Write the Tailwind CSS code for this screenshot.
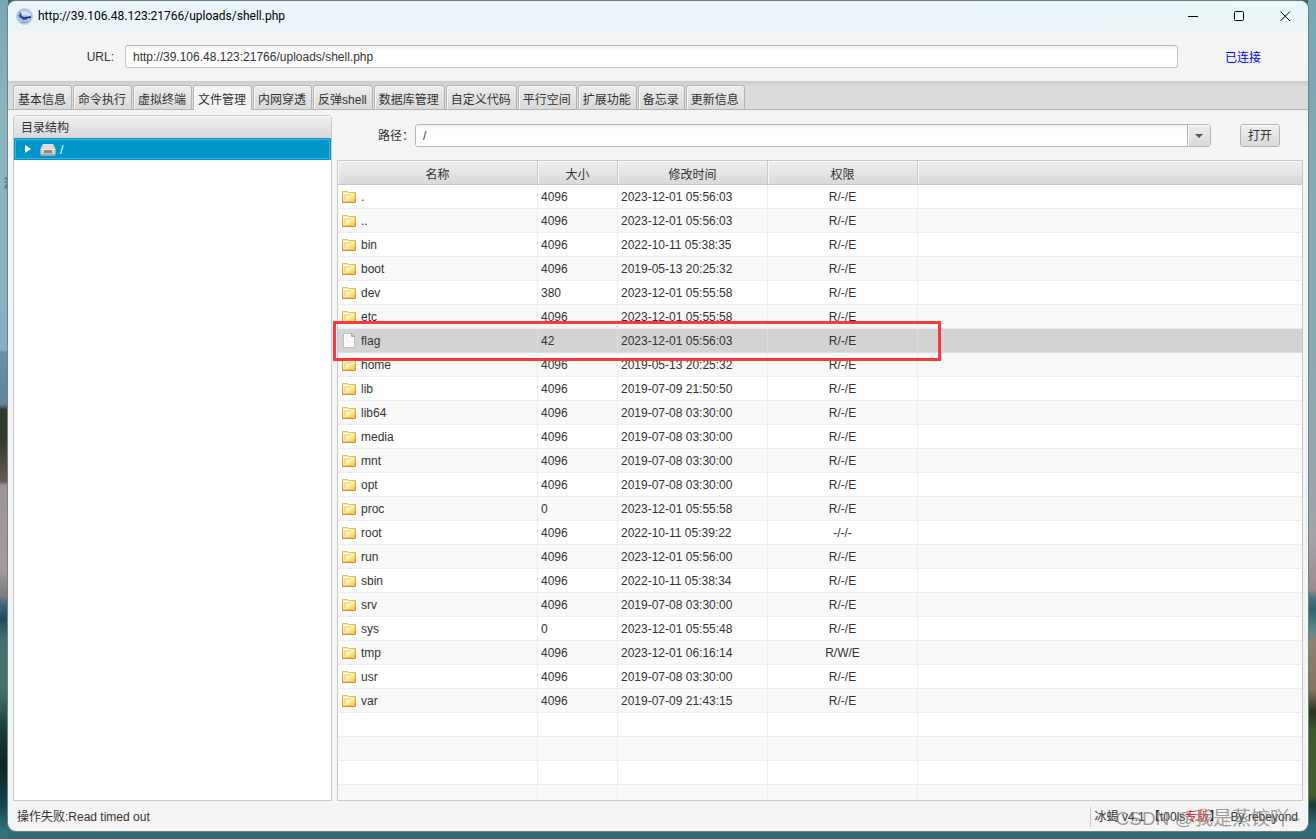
<!DOCTYPE html>
<html lang="zh-CN">
<head>
<meta charset="utf-8">
<title>http://39.106.48.123:21766/uploads/shell.php</title>
<script src="https://cdn.jsdelivr.net/npm/@tailwindcss/browser@4"></script>
</head>
<body class="relative h-screen overflow-hidden bg-[#316a75] font-['Liberation_Sans','Noto_Sans_CJK_SC',sans-serif] text-xs text-[#323232]">
<svg width="0" height="0" class="absolute" aria-hidden="true">
  <defs>
    <linearGradient id="gold" x1="0" y1="0" x2="1" y2="1"><stop offset="0" stop-color="#fff6c4"/><stop offset=".5" stop-color="#fdeb9c"/><stop offset="1" stop-color="#f0c22e"/></linearGradient>
    <linearGradient id="edge" x1="0" y1="0" x2="0" y2="1"><stop offset="0" stop-color="#e2bb48"/><stop offset="1" stop-color="#d58a3a"/></linearGradient>
    <linearGradient id="paper" x1="0" y1="0" x2="1" y2="1"><stop offset="0" stop-color="#f0f0f0"/><stop offset="1" stop-color="#fff"/></linearGradient>
    <symbol id="folder" viewBox="0 0 14 12">
      <path d="M.5 11.500V.5h5l1 1h7v10z" fill="url(#gold)" stroke="url(#edge)"/>
      <path d="M2 2.500h3M8 2.500h4" stroke="#fffbe2" fill="none"/>
      <path d="M2.500 9V4.500h4l1-1h4" stroke="#f0d27a" fill="none"/>
      <path d="M3 5.500h5l1-1h3M4 7.500h3" stroke="#fffbe2" fill="none"/>
      <path d="M1 10.500h12" stroke="#f2c94a" fill="none"/>
    </symbol>
    <symbol id="file" viewBox="0 0 12 15">
      <path d="M.5.5h8l3 3v11H.5z" fill="url(#paper)" stroke="#c2c2c2"/>
      <path d="M1.500 13.500v-12h6" stroke="#fff" fill="none"/>
      <path d="M8.500.5v3h3z" fill="#c5c5c5" stroke="#ababab"/>
    </symbol>
  </defs>
</svg>
<div class="absolute inset-y-0 left-0 w-2 bg-[linear-gradient(#79a5b2_0px,#8db5c0_120px,#86b0be_305px,#6992a5_307px,#5f8596_365px,#2f3b29_372px,#343c28_400px,#514b41_407px,#6a5c55_408px,#9c9493_409px,#9c9493_410px,#a59a9a_570px,#7b7a80_596px,#3e6b7b_604px,#234859_618px,#466f72_640px,#47706d_690px,#193c3c_730px,#0d2524_765px,#17444f_805px,#34717a_831px)] bg-[linear-gradient(#79a5b2_0px,#8db5c0_120px,#86b0be_350px,#6992a5_352px,#5f8596_404px,#2f3b29_410px,#343c28_440px,#514b41_465px,#6a5c55_482px,#9c9493_485px,#a59a9a_570px,#7b7a80_596px,#3e6b7b_604px,#234859_618px,#466f72_640px,#47706d_690px,#193c3c_730px,#0d2524_765px,#17444f_805px,#34717a_831px)]"></div>
<div class="absolute inset-y-0 right-0 w-2 bg-[linear-gradient(#79a5b2_0px,#83a9b6_200px,#8da8b0_400px,#a2a3a7_540px,#9a8a8e_590px,#457480_598px,#34636f_610px,#648b8a_633px,#8e8273_640px,#83725c_690px,#2a3222_712px,#3e5929_730px,#425e2b_795px,#173a36_805px,#2f6b76_825px)]"></div>
<span class="absolute top-[176px] left-[4px] w-[4px] overflow-hidden text-[#26333b]" aria-hidden="true">激</span>

<div class="relative flex h-full flex-col px-2 pt-px pb-2">
<main class="flex min-h-0 flex-1 flex-col overflow-hidden rounded-lg bg-[#f4f4f4] shadow-[0_0_0_1px_#6b8388]">
  <header class="flex h-[30px] shrink-0 items-center bg-linear-to-r from-[#eaf5f9] via-[#ebf4fb] to-[#eaf6f8] pl-2 text-black">
    <svg width="17" height="17" viewBox="0 0 17 17" aria-hidden="true">
      <circle cx="8.500" cy="8.500" r="7.800" fill="#b3c5e0" stroke="#b4c3d8"/>
      <path d="M3 5q5-4 11 0v3q-5-2-9 0z" fill="#d3e1f2"/>
      <path d="M3 4l2 1 1 3 2 1 7-1v2l-5 1 1 1H6l1-1-3-1-2-3 2 0z" fill="#34569a"/>
      <path d="M6 9h9v1H7z" fill="#17366f"/><path d="M4 13l4 1 5-1-2 2H6z" fill="#86a1cb"/>
    </svg>
    <h1 class="ml-[5px] flex-1 font-['Roboto','Noto_Sans',sans-serif] text-xs">http://39.106.48.123:21766/uploads/shell.php</h1>
    <button aria-label="最小化" class="flex h-full w-[46px] items-center justify-center"><svg width="11" height="11" viewBox="0 0 11 11"><path d="M0 5.500h10" stroke="#000"/></svg></button>
    <button aria-label="最大化" class="flex h-full w-[46px] items-center justify-center"><svg width="11" height="11" viewBox="0 0 11 11"><rect x=".5" y=".5" width="9" height="9" rx="1" fill="none" stroke="#000"/></svg></button>
    <button aria-label="关闭" class="flex h-full w-[46px] items-center justify-center"><svg width="11" height="11" viewBox="0 0 11 11"><path d="M.5.5l9.500 9.500M10 .5L.5 10" stroke="#000"/></svg></button>
  </header>

  <form class="flex h-[50px] shrink-0 items-center pr-[46px]">
    <label for="url" class="w-[117px] pt-px pr-[11px] text-right">URL:</label>
    <input id="url" value="http://39.106.48.123:21766/uploads/shell.php" class="h-[23px] min-w-0 flex-1 rounded-[3px] border border-[#c3c3c3] border-t-[#b3b3b3] bg-linear-to-b from-[#f2f2f2] via-white via-20% to-white px-[7px] pt-px">
    <output class="ml-[47px] w-[37px] pt-[3px] text-[#0000ff]">已连接</output>
  </form>

  <nav role="tablist" class="flex h-[29px] shrink-0 items-end gap-px border-b border-[#b5b5b5] bg-linear-to-b from-[#cbcbcb] via-[#dcdcdc] via-20% to-[#dcdcdc] pl-[5px] *:h-6 *:rounded-t-[3px] *:border *:border-b-0 *:border-[#b5b5b5] *:bg-linear-to-b *:from-[#eeeeee] *:to-[#d9d9d9] *:pt-[5px] *:pr-[5px] *:pl-[4px] *:whitespace-nowrap *:shadow-[inset_1px_1px_#f8f8f8] *:aria-selected:-mb-px *:aria-selected:h-[25px] *:aria-selected:from-[#f4f4f4] *:aria-selected:to-[#f4f4f4] *:aria-selected:pb-px">
    <button role="tab">基本信息</button>
    <button role="tab">命令执行</button>
    <button role="tab">虚拟终端</button>
    <button role="tab" aria-selected="true">文件管理</button>
    <button role="tab">内网穿透</button>
    <button role="tab">反弹shell</button>
    <button role="tab">数据库管理</button>
    <button role="tab">自定义代码</button>
    <button role="tab">平行空间</button>
    <button role="tab">扩展功能</button>
    <button role="tab">备忘录</button>
    <button role="tab">更新信息</button>
  </nav>

  <div class="flex min-h-0 flex-1 gap-[5px] px-[5px] pt-[5px]">
    <section class="flex w-[319px] shrink-0 flex-col overflow-hidden rounded-t-[3px] border border-[#c8c8c8] bg-white">
      <h2 class="h-[22px] shrink-0 bg-linear-to-b from-[#efefef] to-[#d9d9d9] pt-1 pl-[7px] shadow-[inset_0_1px_#fafafa]">目录结构</h2>
      <ul role="tree">
        <li role="treeitem" aria-expanded="false" class="flex h-[22px] items-center border border-[#0096c9] bg-[#0096c9] pl-[10px] text-white shadow-[inset_0_0_0_1px_#3fb0d8]">
          <svg width="6" height="8" viewBox="0 0 6 8"><path d="M0 0l6 4-6 4z" fill="#fff"/></svg>
          <svg width="16" height="12" viewBox="0 0 16 12" class="mt-px ml-[9px]"><path d="M3 0h10l3 5v5q0 2-2 2H2q-2 0-2-2V5z" fill="#a6a6a6"/><path d="M3 0h10l2 5H1z" fill="#dcdcdc"/><path d="M1 6h14v4H1z" fill="#cfcfcf"/><path d="M4 6h8v3H4z" fill="#8a8a8a"/><path d="M1 5.500h14" stroke="#efefef"/></svg>
          <span class="ml-1 pt-px">/</span>
        </li>
      </ul>
    </section>

    <section class="flex min-w-0 flex-1 flex-col">
      <form class="flex h-[45px] shrink-0 items-start pt-[9px] pr-[23px]">
        <label for="path" class="w-[78px] pt-1 pl-[41px] whitespace-nowrap">路径：</label>
        <div class="flex h-[23px] min-w-0 flex-1 overflow-hidden rounded-[3px] border border-[#b5b5b5]">
          <input id="path" value="/" class="min-w-0 flex-1 bg-linear-to-b from-[#f0f0f0] via-white via-20% to-white px-[7px]">
          <button type="button" aria-label="选择路径" class="flex w-[23px] items-center justify-center border-l border-[#b5b5b5] bg-linear-to-b from-[#efefef] to-[#d9d9d9] shadow-[inset_1px_1px_#f8f8f8]"><svg width="8" height="4" viewBox="0 0 8 4"><path d="M0 0h8L4 4z" fill="#555"/></svg></button>
        </div>
        <button type="button" class="ml-[29px] h-[23px] w-10 rounded-[3px] border border-[#b5b5b5] bg-linear-to-b from-[#efefef] to-[#d9d9d9] pt-px shadow-[inset_0_1px_#fafafa]">打开</button>
      </form>
      <div class="relative flex min-h-0 flex-1 flex-col">
        <div class="min-h-0 flex-1 overflow-hidden border border-[#c8c8c8] bg-white">
          <table class="w-full table-fixed border-separate border-spacing-0">
            <colgroup><col class="w-[200px]"><col class="w-[80px]"><col class="w-[150px]"><col class="w-[150px]"><col></colgroup>
            <thead>
              <tr class="h-6 *:border-r *:border-b *:border-[#c8c8c8] *:bg-linear-to-b *:from-[#efefef] *:to-[#d9d9d9] *:p-0 *:pt-1 *:font-normal *:shadow-[inset_1px_1px_#f8f8f8] *:last:border-r-0">
                <th scope="col">名称</th><th scope="col">大小</th><th scope="col">修改时间</th><th scope="col">权限</th><td></td>
              </tr>
            </thead>
            <tbody id="files"></tbody>
          </table>
        </div>
        <div class="pointer-events-none absolute top-[161px] -left-1 h-10 w-[608px] border-3 border-[#fb3838]"></div>
      </div>
    </section>
  </div>

  <footer class="relative flex h-[30px] shrink-0 items-center pt-px pr-[10px] pl-[9px]">
    <p class="flex-1 pt-px">操作失败:Read timed out</p>
    <p class="flex h-5 w-[136px] items-center border-l border-[#c8c8c8] pl-1 whitespace-nowrap">冰蝎 v4.1 【t00ls<span class="text-[#e02020]">专版</span>】</p>
    <p class="flex h-5 items-center border-l border-[#d8d8d8] pl-1 whitespace-nowrap">By rebeyond</p>
    <span class="absolute right-2 bottom-0 text-[19px] leading-6 whitespace-nowrap text-[#777777]/70">CSDN @我是蒸饺吖~</span>
  </footer>
</main>
</div>
<script>
const files = [
  ['.', '4096', '2023-12-01 05:56:03'], ['..', '4096', '2023-12-01 05:56:03'],
  ['bin', '4096', '2022-10-11 05:38:35'], ['boot', '4096', '2019-05-13 20:25:32'],
  ['dev', '380', '2023-12-01 05:55:58'], ['etc', '4096', '2023-12-01 05:55:58'],
  ['flag', '42', '2023-12-01 05:56:03'], ['home', '4096', '2019-05-13 20:25:32'],
  ['lib', '4096', '2019-07-09 21:50:50'], ['lib64', '4096', '2019-07-08 03:30:00'],
  ['media', '4096', '2019-07-08 03:30:00'], ['mnt', '4096', '2019-07-08 03:30:00'],
  ['opt', '4096', '2019-07-08 03:30:00'], ['proc', '0', '2023-12-01 05:55:58'],
  ['root', '4096', '2022-10-11 05:39:22', '-/-/-'], ['run', '4096', '2023-12-01 05:56:00'],
  ['sbin', '4096', '2022-10-11 05:38:34'], ['srv', '4096', '2019-07-08 03:30:00'],
  ['sys', '0', '2023-12-01 05:55:48'], ['tmp', '4096', '2023-12-01 06:16:14', 'R/W/E'],
  ['usr', '4096', '2019-07-08 03:30:00'], ['var', '4096', '2019-07-09 21:43:15'],
  [], [], [], []
];
const folder = '<svg width="14" height="12" class="shrink-0"><use href="#folder"/></svg>';
const paper = '<svg width="12" height="15" class="mx-px shrink-0"><use href="#file"/></svg>';
document.getElementById('files').innerHTML = files.map(([name, size, time, perm = 'R/-/E']) => `
  <tr class="${name === 'flag' ? 'h-6 bg-[#d3d3d3] *:border-[#dcdcdc]' : 'h-6 odd:bg-white even:bg-[#f9f9f9] *:border-[#ededed]'} *:border-r *:border-b *:p-0 *:last:border-r-0">
    <td>${name ? `<div class="flex items-center gap-[5px] pl-1">${name === 'flag' ? paper : folder}<span>${name}</span></div>` : ''}</td>
    <td><div class="pl-[3px]">${size ?? ''}</div></td>
    <td><div class="pl-[3px]">${time ?? ''}</div></td>
    <td class="text-center">${name ? perm : ''}</td>
    <td></td>
  </tr>`).join('');
</script>
</body>
</html>
